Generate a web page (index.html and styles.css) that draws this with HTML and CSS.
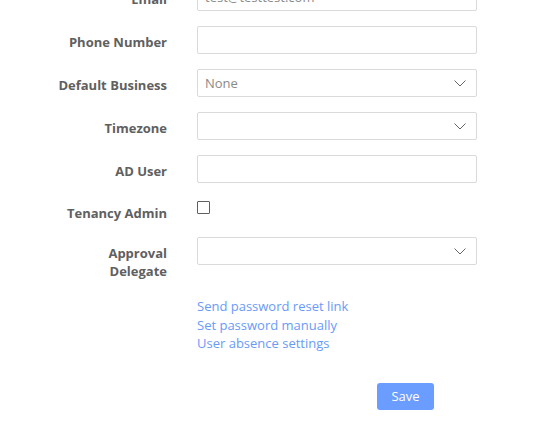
FILE: index.html
```html
<!DOCTYPE html>
<html lang="en">
<head>
<meta charset="utf-8">
<title>User</title>
<link rel="stylesheet" href="styles.css">
</head>
<body>
<form class="form">
  <label class="label">Email</label>
  <div class="field"><div class="input"><span class="value">test@testtest.com</span></div></div>

  <label class="label">Phone Number</label>
  <div class="field"><div class="input"></div></div>

  <label class="label">Default Business</label>
  <div class="field"><div class="input select"><span class="placeholder">None</span><svg class="chev" width="12" height="7" viewBox="0 0 12 7"><path d="M0.5 0.5 L6 6 L11.5 0.5" fill="none" stroke="#666" stroke-width="1"/></svg></div></div>

  <label class="label">Timezone</label>
  <div class="field"><div class="input select"><span></span><svg class="chev" width="12" height="7" viewBox="0 0 12 7"><path d="M0.5 0.5 L6 6 L11.5 0.5" fill="none" stroke="#666" stroke-width="1"/></svg></div></div>

  <label class="label">AD User</label>
  <div class="field"><div class="input"></div></div>

  <label class="label label-check">Tenancy Admin</label>
  <div class="field"><span class="checkbox"></span></div>

  <label class="label">Approval Delegate</label>
  <div class="field"><div class="input select"><span></span><svg class="chev" width="12" height="7" viewBox="0 0 12 7"><path d="M0.5 0.5 L6 6 L11.5 0.5" fill="none" stroke="#666" stroke-width="1"/></svg></div></div>

  <div></div>
  <div class="links">
    <a class="link">Send password reset link</a>
    <a class="link">Set password manually</a>
    <a class="link">User absence settings</a>
  </div>

  <div></div>
  <div class="actions"><button type="button" class="btn">Save</button></div>
</form>
</body>
</html>
```
FILE: styles.css
```css
html, body {
  margin: 0;
  padding: 0;
  background: #fff;
  font-family: "Open Sans", "Noto Sans", sans-serif;
  font-size: 13px;
  overflow: hidden;
}
.form {
  display: grid;
  grid-template-columns: 112px 280px;
  column-gap: 30px;
  row-gap: 15px;
  padding-left: 55px;
  margin-top: -17px;
}
.label {
  text-align: right;
  font-weight: 700;
  color: #606060;
  line-height: 18px;
  padding-top: 7px;
}
.label-check {
  padding-top: 6px;
}
.field {
  display: flex;
  align-items: flex-start;
}
.input {
  box-sizing: border-box;
  width: 280px;
  height: 28px;
  border: 1px solid #dadada;
  border-radius: 2px;
  display: flex;
  align-items: center;
  justify-content: space-between;
  padding: 0 10px 0 7px;
  color: #888;
}
.value, .placeholder { color: #8a8a8a; }
.chev { display: block; }
.checkbox {
  box-sizing: border-box;
  width: 13px;
  height: 13px;
  border: 1px solid #5f5f5f;
  margin-top: 3px;
  border-radius: 1px;
}
.links {
  display: flex;
  flex-direction: column;
  line-height: 18.5px;
  margin-top: 2px;
}
.link {
  color: #6a9af9;
  text-decoration: none;
}
.actions {
  margin-top: 15px;
  padding-left: 180px;
}
.btn {
  width: 57px;
  height: 27px;
  border: none;
  border-radius: 3px;
  background: #6b9cff;
  color: #fff;
  font-family: "Open Sans", "Noto Sans", sans-serif;
  font-size: 13px;
  padding: 0;
}
```
